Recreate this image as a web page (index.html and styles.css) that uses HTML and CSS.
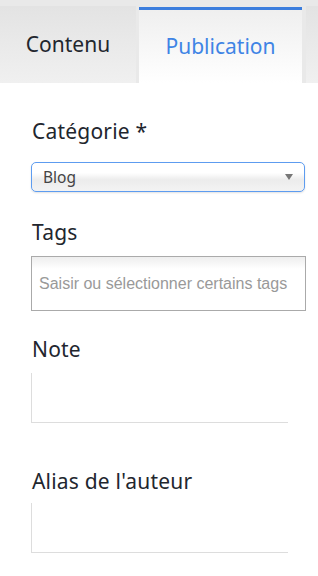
FILE: index.html
```html
<!DOCTYPE html>
<html lang="fr">
<head>
<meta charset="utf-8">
<link rel="stylesheet" href="styles.css">
</head>
<body>
<nav class="tabs">
  <div class="tab">Contenu</div>
  <div class="tab tab-active">Publication</div>
  <div class="tab tab-rest"></div>
</nav>
<form class="form">
  <div class="field field-cat">
    <label class="label">Catégorie *</label>
    <div class="select">
      <span class="select-value">Blog</span>
      <span class="select-arrow"></span>
    </div>
  </div>
  <div class="field field-tags">
    <label class="label">Tags</label>
    <div class="tags-input"><span class="placeholder">Saisir ou sélectionner certains tags</span></div>
  </div>
  <div class="field field-note">
    <label class="label">Note</label>
    <div class="plain-input"></div>
  </div>
  <div class="field field-alias">
    <label class="label">Alias de l'auteur</label>
    <div class="plain-input"></div>
  </div>
</form>
</body>
</html>
```
FILE: styles.css
```css
html, body {
  margin: 0;
  padding: 0;
  background: #fff;
  font-family: "Noto Sans", "Open Sans", sans-serif;
  color: #22262e;
}
.tabs {
  display: flex;
  height: 83px;
  padding-top: 6px;
  box-sizing: border-box;
  background: #e9e9e9;
  gap: 3px;
}
.tab {
  width: 136px;
  flex: none;
  display: flex;
  align-items: center;
  justify-content: center;
  font-size: 21px;
  color: #22262e;
  background: linear-gradient(#e3e3e3, #f0f0f0);
  padding-bottom: 2px;
  box-sizing: border-box;
}
.tab-active {
  width: 163px;
  margin-top: 1px;
  border-top: 3px solid #3b7ddd;
  background: linear-gradient(#efefef, #ffffff);
  color: #3f84e5;
  margin-right: 1px;
}
.tab-rest {
  flex: 1;
  width: auto;
}
.form {
  padding: 0 0 0 31px;
}
.label {
  display: block;
  font-size: 21px;
  line-height: 28px;
  padding-left: 1px;
  color: #22262e;
  letter-spacing: 0.2px;
}
.field-cat { margin-top: 34px; }
.field-cat .label { margin-bottom: 17px; }
.select {
  width: 274px;
  height: 30px;
  box-sizing: border-box;
  border: 1px solid #5d9cf0;
  border-radius: 5px;
  background: linear-gradient(#ffffff 0%, #ffffff 35%, #ececec 60%, #f3f3f3 100%);
  box-shadow: 0 1px 2px rgba(0,0,0,0.12);
  display: flex;
  align-items: center;
  justify-content: space-between;
  padding: 0 11px 0 11px;
}
.select-value {
  font-size: 15.5px;
  color: #444;
}
.select-arrow {
  width: 0;
  height: 0;
  border-left: 4px solid transparent;
  border-right: 4px solid transparent;
  border-top: 6px solid #777;
}
.field-tags { margin-top: 26px; }
.field-tags .label { margin-bottom: 10px; }
.tags-input {
  width: 275px;
  height: 55px;
  box-sizing: border-box;
  border: 1px solid #aaa;
  background: linear-gradient(#eee, #fff 12px);
  display: flex;
  align-items: center;
  padding-left: 7px;
}
.placeholder {
  font-family: "Liberation Sans", Arial, sans-serif;
  font-size: 16px;
  color: #999;
}
.field-note { margin-top: 24px; }
.field-note .label { margin-bottom: 10px; }
.plain-input {
  width: 257px;
  height: 50px;
  box-sizing: border-box;
  border-left: 1px solid #ddd;
  border-bottom: 1px solid #ddd;
}
.field-alias { margin-top: 44px; }
.field-alias .label { margin-bottom: 8px; }
```
